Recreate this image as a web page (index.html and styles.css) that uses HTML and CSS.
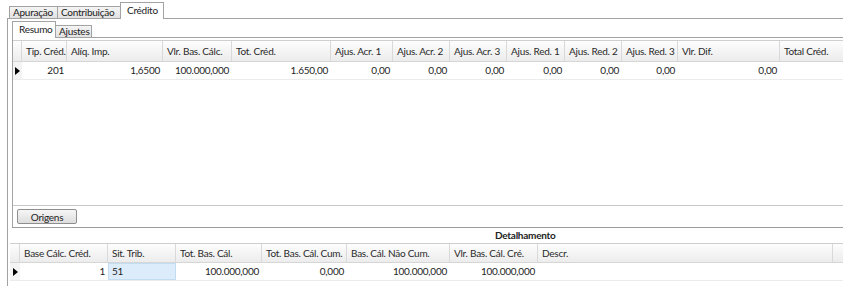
FILE: index.html
```html
<!DOCTYPE html>
<html lang="pt-BR">
<head>
    <meta charset="UTF-8">
    <title>Crédito</title>
    <link rel="stylesheet" href="styles.css">
</head>
<body>

<div class="shell">
    <!-- abas principais -->
    <div class="tabs tabs-outer">
        <div class="tab tab-apu">Apuração</div>
        <div class="tab tab-con">Contribuição</div>
        <div class="tab tab-cre active">Crédito</div>
    </div>

    <div class="outer-panel">
        <!-- abas internas -->
        <div class="tabs tabs-inner">
            <div class="tab tab-res active">Resumo</div>
            <div class="tab tab-aju">Ajustes</div>
        </div>

        <div class="inner-panel">
            <div class="grid grid-top">
                <div class="row head">
                    <div class="cell ind"></div>
                    <div class="cell">Tip. Créd.</div>
                    <div class="cell">Alíq. Imp.</div>
                    <div class="cell">Vlr. Bas. Cálc.</div>
                    <div class="cell">Tot. Créd.</div>
                    <div class="cell">Ajus. Acr. 1</div>
                    <div class="cell">Ajus. Acr. 2</div>
                    <div class="cell">Ajus. Acr. 3</div>
                    <div class="cell">Ajus. Red. 1</div>
                    <div class="cell">Ajus. Red. 2</div>
                    <div class="cell">Ajus. Red. 3</div>
                    <div class="cell">Vlr. Dif.</div>
                    <div class="cell">Total Créd.</div>
                </div>
                <div class="row data">
                    <div class="cell ind"><span class="arrow"></span></div>
                    <div class="cell num">201</div>
                    <div class="cell num">1,6500</div>
                    <div class="cell num">100.000,000</div>
                    <div class="cell num">1.650,00</div>
                    <div class="cell num">0,00</div>
                    <div class="cell num">0,00</div>
                    <div class="cell num">0,00</div>
                    <div class="cell num">0,00</div>
                    <div class="cell num">0,00</div>
                    <div class="cell num">0,00</div>
                    <div class="cell num">0,00</div>
                    <div class="cell"></div>
                </div>
            </div>

            <div class="btnbar">
                <button class="btn">Origens</button>
            </div>
        </div>

        <div class="detail-title">Detalhamento</div>

        <div class="grid grid-bottom">
            <div class="row head">
                <div class="cell ind"></div>
                <div class="cell">Base Cálc. Créd.</div>
                <div class="cell">Sit. Trib.</div>
                <div class="cell">Tot. Bas. Cál.</div>
                <div class="cell">Tot. Bas. Cál. Cum.</div>
                <div class="cell">Bas. Cál. Não Cum.</div>
                <div class="cell">Vlr. Bas. Cál. Cré.</div>
                <div class="cell">Descr.</div>
                <div class="cell"></div>
            </div>
            <div class="row data">
                <div class="cell ind"><span class="arrow"></span></div>
                <div class="cell num">1</div>
                <div class="cell selected">51</div>
                <div class="cell num">100.000,000</div>
                <div class="cell num">0,000</div>
                <div class="cell num">100.000,000</div>
                <div class="cell num">100.000,000</div>
                <div class="cell"></div>
            </div>
        </div>
    </div>
</div>

</body>
</html>
```

FILE: styles.css
```css
* {
    box-sizing: border-box;
}

body {
    margin: 0;
    background: #fff;
    font-family: Lato, "Open Sans", sans-serif;
    font-size: 10px;
    letter-spacing: -0.25px;
    color: #1e1e1e;
}

.shell {
    width: 843px;
}

/* Abas */
.tabs {
    display: flex;
    align-items: flex-end;
    border-bottom: 1px solid #a3a3a3;
}

.tabs-outer {
    height: 19px;
    margin-left: 7px;
    padding-left: 2px;
}

.tabs-inner {
    height: 19px;
    margin-left: 4px;
}

.tab {
    height: 12px;
    line-height: 11px;
    padding-left: 3px;
    border: 1px solid #a3a3a3;
    border-bottom: none;
    background: linear-gradient(#f4f4f4, #e2e2e2);
    color: #222;
    white-space: nowrap;
}

.tab + .tab {
    margin-left: -1px;
}

.tab.active {
    height: 17px;
    line-height: 14px;
    padding-left: 6px;
    margin-bottom: -1px;
    background: #fff;
    position: relative;
}

.tab-apu { width: 49px; }
.tab-con { width: 64px; }
.tab-cre { width: 44px; }
.tab-res { width: 44px; padding-left: 4px; }
.tab-aju { width: 37px; }

/* Painéis */
.outer-panel {
    margin-left: 7px;
    border-left: 1px solid #a3a3a3;
    height: 267px;
}

.inner-panel {
    margin-left: 4px;
    border-left: 1px solid #a3a3a3;
    border-bottom: 1px solid #9c9c9c;
    padding-top: 2px;
}

/* Grades */
.grid-top {
    height: 166px;
    border-bottom: 1px solid #c9c9c9;
}

.row {
    display: grid;
}

.grid-top .row {
    grid-template-columns: 9px 45px 96px 69px 99px 62px 57px 57px 58px 57px 56px 102px 63px;
}

.grid-bottom {
    margin-left: 2px;
}

.grid-bottom .row {
    grid-template-columns: 10px 88px 68px 86px 85px 103px 88px 295px 10px;
}

.row.head {
    border-top: 1px solid #cfcfcf;
    border-bottom: 1px solid #d6d6d6;
    background: linear-gradient(#fdfdfd, #ececec);
}

.grid-top .row.head {
    height: 22px;
}

.grid-bottom .row.head {
    height: 20px;
}

.row.head .cell {
    border-right: 1px solid #d9d9d9;
    padding-left: 4px;
    color: #2a2a2a;
    display: flex;
    align-items: center;
}

.row.head .cell:last-child {
    border-right: none;
}

.row.data {
    height: 18px;
    border-bottom: 1px solid #ececec;
}

.cell {
    white-space: nowrap;
    overflow: hidden;
}

.row.data .cell {
    line-height: 17px;
    padding: 0 3px;
}

.row.data .num {
    text-align: right;
}

.row.data .ind {
    background: #f3f3f3;
    padding: 0;
    display: flex;
    align-items: center;
    justify-content: center;
}

.arrow {
    width: 0;
    height: 0;
    border-left: 5px solid #000;
    border-top: 4px solid transparent;
    border-bottom: 4px solid transparent;
}

.row.data .selected {
    background: #dcecfb;
    border: 1px solid #c2dcf2;
    line-height: 15px;
}

/* Botão */
.btnbar {
    height: 21px;
    padding: 3px 0 0 4px;
}

.btn {
    width: 60px;
    height: 15px;
    padding: 0;
    font-family: inherit;
    font-size: 10px;
    letter-spacing: -0.25px;
    color: #222;
    border: 1px solid #8e8e8e;
    border-radius: 2px;
    background: linear-gradient(#f6f6f6, #dddddd);
}

.detail-title {
    height: 15px;
    line-height: 15px;
    padding-left: 487px;
    font-weight: bold;
    color: #222;
}
```
